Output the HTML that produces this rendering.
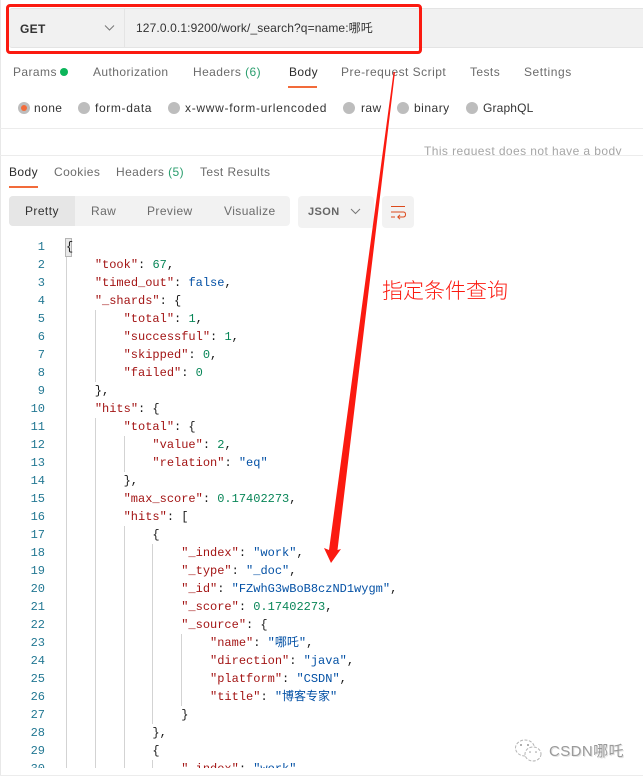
<!DOCTYPE html>
<html>
<head>
<meta charset="utf-8">
<style>
html,body{margin:0;padding:0;background:#fff}
#p{position:relative;width:643px;height:779px;overflow:hidden;background:#fff;font-family:"Liberation Sans","Noto Sans CJK SC",sans-serif;font-size:12px;color:#6b6b6b}
.a{position:absolute}
.t{position:absolute;white-space:nowrap;line-height:16px;letter-spacing:.42px}
.r{position:absolute;width:12px;height:12px;border-radius:50%;background:#bdbdbd;top:102px}
.g{position:absolute;width:1px;background:#d3d3d3}
#code{position:absolute;left:0;top:238px;width:643px;height:530px;overflow:hidden;font-family:"Liberation Mono","Noto Sans CJK SC",monospace;font-size:12px;line-height:18px}
.l{position:absolute;left:66px;white-space:pre;height:18px;color:#1a1a1a}
.n{position:absolute;left:15px;width:30px;text-align:right;color:#237893;height:18px}
.k{color:#a31515}.s{color:#0451a5}.d{color:#098658}
</style>
</head>
<body>
<div id="p">
<div class="a" style="left:0;top:0;width:1px;height:775px;background:#e8e8e8"></div>
<div class="a" style="left:0;top:775px;width:643px;height:1px;background:#ececec"></div>

<div class="a" style="left:9px;top:8px;width:634px;height:38px;background:#f1f1f1;border-top:1px solid #e4e4e4;border-bottom:1px solid #e4e4e4;border-radius:3px 0 0 3px"></div>
<div class="a" style="left:124px;top:8px;width:1px;height:40px;background:#e4e4e4"></div>
<div class="t" style="left:20px;top:21px;font-weight:bold;color:#333;letter-spacing:.3px">GET</div>
<svg class="a" style="left:104px;top:24px" width="12" height="8"><path d="M1 1.5 L5.5 6 L10 1.5" fill="none" stroke="#777" stroke-width="1"/></svg>
<div class="t" style="left:136px;top:20px;color:#333;letter-spacing:.12px">127.0.0.1:9200/work/_search?q=name:哪吒</div>
<div class="a" style="left:6px;top:4px;width:410px;height:44px;border:3px solid #fb1a10;border-radius:4px"></div>

<div class="t" style="left:13px;top:64px">Params</div>
<div class="a" style="left:60px;top:68px;width:8px;height:8px;border-radius:50%;background:#0cb55a"></div>
<div class="t" style="left:93px;top:64px">Authorization</div>
<div class="t" style="left:193px;top:64px">Headers <span style="color:#2b9e6e">(6)</span></div>
<div class="t" style="left:289px;top:64px;color:#2c2c2c">Body</div>
<div class="a" style="left:288px;top:86px;width:29px;height:2px;background:#f26b3a"></div>
<div class="t" style="left:341px;top:64px;letter-spacing:.47px">Pre-request Script</div>
<div class="t" style="left:470px;top:64px">Tests</div>
<div class="t" style="left:524px;top:64px;letter-spacing:.55px">Settings</div>

<div class="r" style="left:18px"></div>
<div class="a" style="left:21px;top:105px;width:6px;height:6px;border-radius:50%;background:#f26b3a"></div>
<div class="t" style="left:34px;top:100px;color:#333">none</div>
<div class="r" style="left:78px"></div>
<div class="t" style="left:95px;top:100px;color:#333;letter-spacing:.64px">form-data</div>
<div class="r" style="left:168px"></div>
<div class="t" style="left:185px;top:100px;color:#333;letter-spacing:.7px">x-www-form-urlencoded</div>
<div class="r" style="left:343px"></div>
<div class="t" style="left:361px;top:100px;color:#333">raw</div>
<div class="r" style="left:397px"></div>
<div class="t" style="left:414px;top:100px;color:#333;letter-spacing:.5px">binary</div>
<div class="r" style="left:466px"></div>
<div class="t" style="left:483px;top:100px;color:#333;letter-spacing:.15px">GraphQL</div>
<div class="a" style="left:0;top:128px;width:643px;height:1px;background:#ececec"></div>

<div class="a" style="left:0;top:130px;width:643px;height:25px;overflow:hidden"><div class="t" style="left:424px;top:13px;color:#a6a6a6">This request does not have a body</div></div>
<div class="a" style="left:0;top:155px;width:643px;height:1px;background:#ececec"></div>

<div class="t" style="left:9px;top:164px;color:#2c2c2c">Body</div>
<div class="a" style="left:9px;top:186px;width:29px;height:2px;background:#f26b3a"></div>
<div class="t" style="left:54px;top:164px">Cookies</div>
<div class="t" style="left:116px;top:164px">Headers <span style="color:#2b9e6e">(5)</span></div>
<div class="t" style="left:200px;top:164px">Test Results</div>

<div class="a" style="left:9px;top:196px;width:281px;height:30px;background:#f2f2f2;border-radius:4px"></div>
<div class="a" style="left:9px;top:196px;width:66px;height:30px;background:#e6e6e6;border-radius:4px 0 0 4px"></div>
<div class="t" style="left:25px;top:203px;color:#333">Pretty</div>
<div class="t" style="left:91px;top:203px">Raw</div>
<div class="t" style="left:147px;top:203px">Preview</div>
<div class="t" style="left:224px;top:203px">Visualize</div>

<div class="a" style="left:298px;top:196px;width:76px;height:32px;background:#f2f2f2;border-radius:4px"></div>
<div class="t" style="left:308px;top:204px;font-size:11px;font-weight:bold;color:#666">JSON</div>
<svg class="a" style="left:350px;top:208px" width="12" height="8"><path d="M1 1 L5.5 5.5 L10 1" fill="none" stroke="#777" stroke-width="1"/></svg>
<div class="a" style="left:382px;top:196px;width:32px;height:32px;background:#f2f2f2;border-radius:4px"></div>
<svg class="a" style="left:390px;top:205px" width="16" height="15"><path d="M1 1.5 H15 M1 7 H13.5 Q15.5 7 15.5 9.5 Q15.5 12 13 12 H8 M10 9.8 L7.8 12 L10 14.2 M1 12 H5" fill="none" stroke="#dc4a1c" stroke-width="1"/></svg>

<div id="code">
<div class="g" style="left:66px;top:18px;height:512px"></div>
<div class="g" style="left:95px;top:72px;height:72px"></div>
<div class="g" style="left:95px;top:180px;height:350px"></div>
<div class="g" style="left:124px;top:198px;height:36px"></div>
<div class="g" style="left:124px;top:288px;height:242px"></div>
<div class="g" style="left:152px;top:306px;height:180px"></div>
<div class="g" style="left:152px;top:522px;height:8px"></div>
<div class="g" style="left:181px;top:396px;height:72px"></div>
<div class="a" style="left:65px;top:0;width:5px;height:17px;background:#e8e8e8;border:1px solid #b5b5b5"></div>

<div class="n" style="top:0">1</div><div class="l" style="top:0">{</div>
<div class="n" style="top:18px">2</div><div class="l" style="top:18px">    <span class="k">"took"</span>: <span class="d">67</span>,</div>
<div class="n" style="top:36px">3</div><div class="l" style="top:36px">    <span class="k">"timed_out"</span>: <span class="s">false</span>,</div>
<div class="n" style="top:54px">4</div><div class="l" style="top:54px">    <span class="k">"_shards"</span>: {</div>
<div class="n" style="top:72px">5</div><div class="l" style="top:72px">        <span class="k">"total"</span>: <span class="d">1</span>,</div>
<div class="n" style="top:90px">6</div><div class="l" style="top:90px">        <span class="k">"successful"</span>: <span class="d">1</span>,</div>
<div class="n" style="top:108px">7</div><div class="l" style="top:108px">        <span class="k">"skipped"</span>: <span class="d">0</span>,</div>
<div class="n" style="top:126px">8</div><div class="l" style="top:126px">        <span class="k">"failed"</span>: <span class="d">0</span></div>
<div class="n" style="top:144px">9</div><div class="l" style="top:144px">    },</div>
<div class="n" style="top:162px">10</div><div class="l" style="top:162px">    <span class="k">"hits"</span>: {</div>
<div class="n" style="top:180px">11</div><div class="l" style="top:180px">        <span class="k">"total"</span>: {</div>
<div class="n" style="top:198px">12</div><div class="l" style="top:198px">            <span class="k">"value"</span>: <span class="d">2</span>,</div>
<div class="n" style="top:216px">13</div><div class="l" style="top:216px">            <span class="k">"relation"</span>: <span class="s">"eq"</span></div>
<div class="n" style="top:234px">14</div><div class="l" style="top:234px">        },</div>
<div class="n" style="top:252px">15</div><div class="l" style="top:252px">        <span class="k">"max_score"</span>: <span class="d">0.17402273</span>,</div>
<div class="n" style="top:270px">16</div><div class="l" style="top:270px">        <span class="k">"hits"</span>: [</div>
<div class="n" style="top:288px">17</div><div class="l" style="top:288px">            {</div>
<div class="n" style="top:306px">18</div><div class="l" style="top:306px">                <span class="k">"_index"</span>: <span class="s">"work"</span>,</div>
<div class="n" style="top:324px">19</div><div class="l" style="top:324px">                <span class="k">"_type"</span>: <span class="s">"_doc"</span>,</div>
<div class="n" style="top:342px">20</div><div class="l" style="top:342px">                <span class="k">"_id"</span>: <span class="s">"FZwhG3wBoB8czND1wygm"</span>,</div>
<div class="n" style="top:360px">21</div><div class="l" style="top:360px">                <span class="k">"_score"</span>: <span class="d">0.17402273</span>,</div>
<div class="n" style="top:378px">22</div><div class="l" style="top:378px">                <span class="k">"_source"</span>: {</div>
<div class="n" style="top:396px">23</div><div class="l" style="top:396px">                    <span class="k">"name"</span>: <span class="s">"哪吒"</span>,</div>
<div class="n" style="top:414px">24</div><div class="l" style="top:414px">                    <span class="k">"direction"</span>: <span class="s">"java"</span>,</div>
<div class="n" style="top:432px">25</div><div class="l" style="top:432px">                    <span class="k">"platform"</span>: <span class="s">"CSDN"</span>,</div>
<div class="n" style="top:450px">26</div><div class="l" style="top:450px">                    <span class="k">"title"</span>: <span class="s">"博客专家"</span></div>
<div class="n" style="top:468px">27</div><div class="l" style="top:468px">                }</div>
<div class="n" style="top:486px">28</div><div class="l" style="top:486px">            },</div>
<div class="n" style="top:504px">29</div><div class="l" style="top:504px">            {</div>
<div class="n" style="top:522px">30</div><div class="l" style="top:522px">                <span class="k">"_index"</span>: <span class="s">"work"</span>,</div>
</div>

<svg class="a" style="left:0;top:0" width="643" height="779"><polygon points="393.6,72 395,72 337.5,550 341,549 331,563 324,548 329,550" fill="#fb1a10"/></svg>
<div class="a" style="left:382px;top:276px;font-family:'Noto Sans CJK SC',sans-serif;font-size:21px;line-height:28px;color:#fb1a10;white-space:nowrap;font-weight:300">指定条件查询</div>

<svg class="a" style="left:514px;top:738px" width="30" height="26"><ellipse cx="11" cy="10" rx="9.5" ry="8" fill="#fff" stroke="#b5b5b5" stroke-width="1" stroke-dasharray="3 1.5"/><ellipse cx="19" cy="16" rx="8" ry="7" fill="#fff" stroke="#b5b5b5" stroke-width="1" stroke-dasharray="3 1.5"/><circle cx="7" cy="7" r="1" fill="#999"/><circle cx="14" cy="7" r="1" fill="#999"/><circle cx="16" cy="14" r=".8" fill="#999"/><circle cx="22" cy="14" r=".8" fill="#999"/></svg>
<div class="a" style="left:549px;top:743px;font-size:15px;line-height:18px;color:#9a9a9a;white-space:nowrap;letter-spacing:.4px;text-shadow:1px 1px 0 #e4e4e4">CSDN哪吒</div>
</div>
</body>
</html>
